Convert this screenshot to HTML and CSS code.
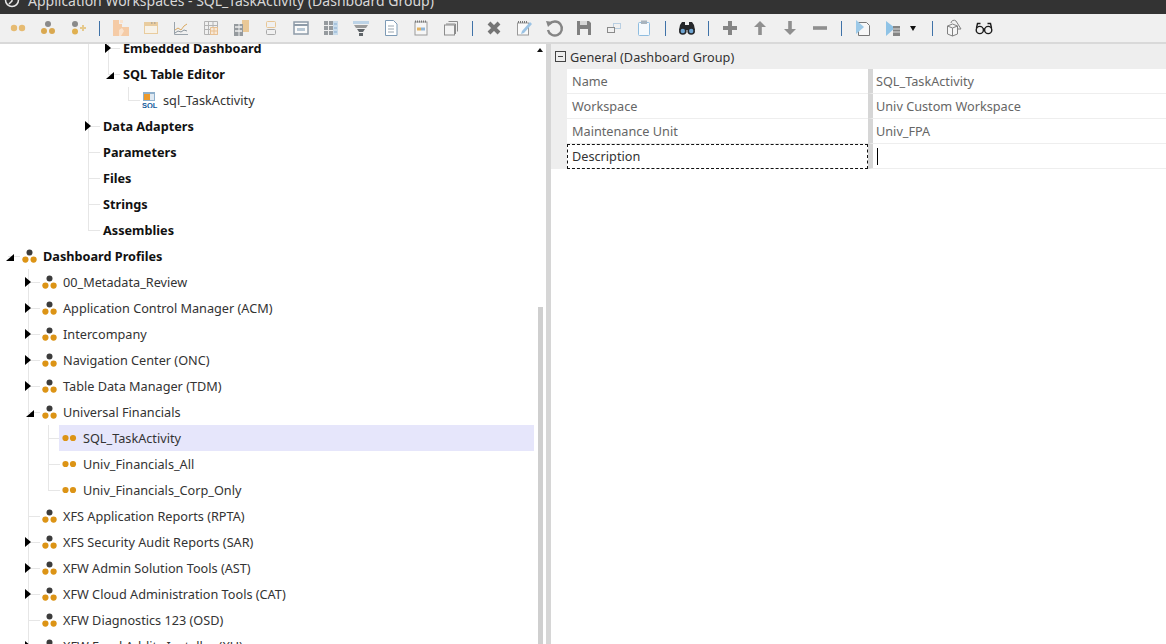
FILE: index.html
```html
<!DOCTYPE html>
<html lang="en">
<head>
    <meta charset="UTF-8">
    <meta name="viewport" content="width=device-width, initial-scale=1.0">
    <title>Application Workspaces</title>
    <link rel="stylesheet" href="styles.css">
</head>
<body>
    <svg class="sprite" aria-hidden="true">
        <symbol id="ico-profile" viewBox="0 0 15 15">
            <circle cx="7.5" cy="3.6" r="3" fill="#3c3c3c"/>
            <circle cx="3.4" cy="10.6" r="3.1" fill="#dc9416"/>
            <circle cx="11.6" cy="10.6" r="3.1" fill="#dc9416"/>
        </symbol>
        <symbol id="ico-group" viewBox="0 0 15 15">
            <circle cx="3.5" cy="7" r="3.1" fill="#dc9416"/>
            <circle cx="11" cy="7" r="3.1" fill="#dc9416"/>
        </symbol>
    </svg>

    <div class="titlebar">
        <svg class="app-logo" width="16" height="16" viewBox="0 0 16 16"><circle cx="8" cy="5" r="6.5" fill="none" stroke="#e8e8e8" stroke-width="1.5"/><path d="M8 2v4l-3 3" fill="none" stroke="#e8e8e8" stroke-width="1.5"/></svg>
        <span class="title">Application Workspaces - SQL_TaskActivity (Dashboard Group)</span>
    </div>

    <div class="toolbar">
        <span class="tool"><svg width="20" height="20" viewBox="0 0 20 20"><circle cx="6" cy="10" r="3.2" fill="#e6bb72"/><circle cx="14" cy="10" r="3.2" fill="#e6bb72"/></svg></span>
        <span class="tool"><svg width="20" height="20" viewBox="0 0 20 20"><circle cx="10" cy="6" r="3" fill="#8a8a8a"/><circle cx="6" cy="13" r="3" fill="#d9a850"/><circle cx="14" cy="13" r="3" fill="#d9a850"/></svg></span>
        <span class="tool"><svg width="20" height="20" viewBox="0 0 20 20"><circle cx="7" cy="6" r="3" fill="#8a8a8a"/><circle cx="7" cy="13.5" r="3" fill="#e0b050"/><path d="M12 10h6M15 7v6" stroke="#e6c98c" stroke-width="2"/></svg></span>
        <span class="sep"></span>
        <span class="tool"><svg width="20" height="20" viewBox="0 0 20 20"><path d="M2 2h6v4h3v3h7v9H2z" fill="#f5cba6"/><path d="M9 2h3v3H9zM8 12l3-2 2 3-3 5H8z" fill="#f9e3cf"/></svg></span>
        <span class="tool dim"><svg width="20" height="20" viewBox="0 0 20 20"><rect x="3.5" y="4.5" width="13" height="11" fill="#fbf3e6" stroke="#e7bd7c"/><path d="M4 5h12v3H4z" fill="#e7bd7c"/><path d="M10 5h1.5M13 5h1.5" stroke="#666"/></svg></span>
        <span class="tool"><svg width="20" height="20" viewBox="0 0 20 20"><path d="M3.5 4v12.5H17" fill="none" stroke="#9aa3ab"/><path d="M4 12l3-2 3 2 3-4 3-2" fill="none" stroke="#d9a860"/><path d="M4 15l3-2 3 1 3-2 3 1" fill="none" stroke="#8a949c"/></svg></span>
        <span class="tool dim"><svg width="20" height="20" viewBox="0 0 20 20"><path d="M3.5 3.5h13v13h-13zM3.5 7.5h13M3.5 11.5h13M7.5 3.5v13M12 3.5v13" fill="none" stroke="#9a9a9a"/><path d="M9.5 9.500h7v7h-7zM9.5 13h7M13 9.5v7" fill="#fbe6cd" stroke="#e5ac6b"/></svg></span>
        <span class="tool dim"><svg width="20" height="20" viewBox="0 0 20 20"><path d="M11 2h7v12h-7z" fill="#e7b872"/><path d="M3 6h9v12H3z" fill="#6f767c"/><path d="M4 9h7M4 13h7" stroke="#eee" stroke-width="1.5"/><path d="M8 6v12" stroke="#eee"/></svg></span>
        <span class="tool dim"><svg width="20" height="20" viewBox="0 0 20 20"><rect x="5.5" y="3.5" width="9" height="6" rx="1" fill="none" stroke="#e5b56f"/><rect x="5.5" y="11.5" width="9" height="5" rx="1" fill="none" stroke="#8c8c8c"/></svg></span>
        <span class="tool dim"><svg width="20" height="20" viewBox="0 0 20 20"><rect x="3" y="4" width="14" height="12" fill="#fff" stroke="#66788a" stroke-width="1.5"/><path d="M3 7h14" stroke="#66788a" stroke-width="2"/><path d="M6 10h8v3h-8z" fill="#9fb6c9"/></svg></span>
        <span class="tool dim"><svg width="20" height="20" viewBox="0 0 20 20"><path d="M3 3h9v14H3z" fill="#6f767c"/><path d="M3 7.5h9M3 12.5h9M7.5 3v14" stroke="#eee"/><path d="M12 3h5v14h-5z" fill="#b9d4ea"/><path d="M13 6h3M13 10h3M13 14h3" stroke="#5c8fc0"/></svg></span>
        <span class="tool"><svg width="20" height="20" viewBox="0 0 20 20"><path d="M2 3h16v3H2z" fill="#bdd3e6"/><path d="M3 7h14l-2 3H5z" fill="#9a9a9a"/><path d="M6 11h8l-2 3H8zM8 15h4v3H8z" fill="#5f6468"/></svg></span>
        <span class="tool"><svg width="20" height="20" viewBox="0 0 20 20"><path d="M4.5 2.5h8l3.5 3.5v11.5H4.5z" fill="#fff" stroke="#7d9ab5"/><path d="M7 8h6M7 11h6M7 14h6" stroke="#9aa6b0"/></svg></span>
        <span class="tool"><svg width="20" height="20" viewBox="0 0 20 20"><rect x="4" y="4" width="12" height="13" fill="#f6f6f6" stroke="#9a9a9a"/><path d="M4 3.5h12" stroke="#777" stroke-dasharray="1 1" stroke-width="2"/><rect x="6" y="9.5" width="4" height="3" fill="#e3b25e"/><rect x="10" y="9.5" width="4" height="3" fill="#8fb5d8"/></svg></span>
        <span class="tool"><svg width="20" height="20" viewBox="0 0 20 20"><path d="M7.5 3.5h9v10M5 6h9.5v10" fill="none" stroke="#8c8c8c"/><rect x="3.5" y="7" width="10" height="10" fill="#f3f3f3" stroke="#8c8c8c"/></svg></span>
        <span class="sep"></span>
        <span class="tool"><svg width="20" height="20" viewBox="0 0 20 20"><path d="M5 5l10 10M15 5L5 15" stroke="#757575" stroke-width="4"/></svg></span>
        <span class="tool"><svg width="20" height="20" viewBox="0 0 20 20"><rect x="3.5" y="5" width="11" height="12" fill="#fafafa" stroke="#9a9a9a"/><path d="M4 4h10" stroke="#777" stroke-dasharray="1 1" stroke-width="2"/><path d="M8 13l8-9 2 2-8 9-3 1z" fill="#9cc3e4"/></svg></span>
        <span class="tool"><svg width="20" height="20" viewBox="0 0 20 20"><path d="M5.5 6A7 7 0 1 1 4 12" fill="none" stroke="#858585" stroke-width="2.4"/><path d="M2 3l7 1-5 5z" fill="#858585"/></svg></span>
        <span class="tool"><svg width="20" height="20" viewBox="0 0 20 20"><path d="M3 3h12l2 2v12H3z" fill="#808080"/><path d="M6 3h7v4H6z" fill="#d8d8d8"/><path d="M6 11h8v6H6z" fill="#f0f0f0"/></svg></span>
        <span class="tool"><svg width="20" height="20" viewBox="0 0 20 20"><rect x="9.5" y="5.5" width="7" height="5" fill="none" stroke="#b9cfe2"/><rect x="3.5" y="9.5" width="7" height="5" fill="#f0f0f0" stroke="#8a8a8a"/></svg></span>
        <span class="tool"><svg width="20" height="20" viewBox="0 0 20 20"><rect x="4.5" y="4.5" width="11" height="13" rx="1" fill="#f5f9fc" stroke="#8fbde0"/><rect x="7" y="2.5" width="6" height="3.5" fill="#a8b4be"/></svg></span>
        <span class="sep"></span>
        <span class="tool"><svg width="20" height="20" viewBox="0 0 20 20"><path d="M3 7l2-3h3v3h4V4h3l2 3 1 5H2z" fill="#26282b"/><circle cx="5.8" cy="13" r="3.8" fill="#26282b"/><circle cx="14.2" cy="13" r="3.8" fill="#26282b"/><circle cx="5.8" cy="13" r="2.2" fill="#6fa5d2"/><circle cx="14.2" cy="13" r="2.2" fill="#6fa5d2"/></svg></span>
        <span class="sep"></span>
        <span class="tool"><svg width="20" height="20" viewBox="0 0 20 20"><path d="M10 3v14M3 10h14" stroke="#858585" stroke-width="4"/></svg></span>
        <span class="tool"><svg width="20" height="20" viewBox="0 0 20 20"><path d="M10 17V6" stroke="#8f8f8f" stroke-width="3.6"/><path d="M4 9l6-6 6 6z" fill="#8f8f8f"/></svg></span>
        <span class="tool"><svg width="20" height="20" viewBox="0 0 20 20"><path d="M10 3v11" stroke="#8f8f8f" stroke-width="3.6"/><path d="M4 11l6 6 6-6z" fill="#8f8f8f"/></svg></span>
        <span class="tool"><svg width="20" height="20" viewBox="0 0 20 20"><path d="M3 10h14" stroke="#8f8f8f" stroke-width="3.6"/></svg></span>
        <span class="sep"></span>
        <span class="tool"><svg width="20" height="20" viewBox="0 0 20 20"><path d="M5.5 4.5h8l3 3v10h-11z" fill="#f7f7f7" stroke="#777"/><path d="M3 2l8 7-8 7z" fill="#9cc9e8"/></svg></span>
        <span class="tool"><svg width="20" height="20" viewBox="0 0 20 20"><path d="M3 3l9 7-9 8z" fill="#8fc3e6"/><path d="M10 8h7v10h-7z" fill="#858585"/><path d="M10 11h7M10 14h7" stroke="#ddd"/></svg></span>
        <span class="drop"></span>
        <span class="sep"></span>
        <span class="tool"><svg width="20" height="20" viewBox="0 0 20 20"><path d="M3.5 8l5-2 5 2v8l-5 2-5-2zM3.500 8l5 2 5-2M8.5 10v8" fill="#f5f5f5" stroke="#808080"/><path d="M7 5a3 3 0 0 1 5-2l5 8h-4" fill="none" stroke="#808080"/></svg></span>
        <span class="tool"><svg width="20" height="20" viewBox="0 0 20 20"><circle cx="5.8" cy="12" r="3.6" fill="none" stroke="#1c1c1c" stroke-width="1.4"/><circle cx="14.2" cy="12" r="3.6" fill="none" stroke="#1c1c1c" stroke-width="1.4"/><path d="M2.500 10l1-4.500h3M17.500 10l-1-4.500h-3M9 11h2" fill="none" stroke="#1c1c1c" stroke-width="1.4"/></svg></span>
    </div>

    <div class="workspace">
        <div class="tree-panel">
            <div class="tree">
                <div class="row"><span class="c"></span><span class="c"></span><span class="c"></span><span class="c"></span><span class="c v"></span><span class="c t"><i class="arrow"></i></span><span class="node head">Embedded Dashboard</span></div>
                <div class="row"><span class="c"></span><span class="c"></span><span class="c"></span><span class="c"></span><span class="c v"></span><span class="c l"><i class="arrow open"></i></span><span class="node head">SQL Table Editor</span></div>
                <div class="row"><span class="c"></span><span class="c"></span><span class="c"></span><span class="c"></span><span class="c v"></span><span class="c"></span><span class="c l"></span><span class="node">
                    <svg class="sql-icon" width="16" height="16" viewBox="0 0 16 16"><rect x="1" y="0" width="12" height="9" fill="#8fb0cc"/><rect x="2" y="2" width="6" height="6" fill="#ec9a2c"/><rect x="8" y="2" width="4" height="6" fill="#dfe9f2"/><text x="0" y="15.5" class="sql-text">SQL</text></svg>
                    sql_TaskActivity</span></div>
                <div class="row"><span class="c"></span><span class="c"></span><span class="c"></span><span class="c"></span><span class="c t"><i class="arrow"></i></span><span class="node head">Data Adapters</span></div>
                <div class="row"><span class="c"></span><span class="c"></span><span class="c"></span><span class="c"></span><span class="c t"></span><span class="node head">Parameters</span></div>
                <div class="row"><span class="c"></span><span class="c"></span><span class="c"></span><span class="c"></span><span class="c t"></span><span class="node head">Files</span></div>
                <div class="row"><span class="c"></span><span class="c"></span><span class="c"></span><span class="c"></span><span class="c t"></span><span class="node head">Strings</span></div>
                <div class="row"><span class="c"></span><span class="c"></span><span class="c"></span><span class="c"></span><span class="c l"></span><span class="node head">Assemblies</span></div>

                <div class="row"><span class="c h"><i class="arrow open"></i></span><span class="node strong"><svg class="icon"><use href="#ico-profile"/></svg>Dashboard Profiles</span></div>

                <div class="row"><span class="c"></span><span class="c t"><i class="arrow"></i></span><span class="node"><svg class="icon"><use href="#ico-profile"/></svg>00_Metadata_Review</span></div>
                <div class="row"><span class="c"></span><span class="c t"><i class="arrow"></i></span><span class="node"><svg class="icon"><use href="#ico-profile"/></svg>Application Control Manager (ACM)</span></div>
                <div class="row"><span class="c"></span><span class="c t"><i class="arrow"></i></span><span class="node"><svg class="icon"><use href="#ico-profile"/></svg>Intercompany</span></div>
                <div class="row"><span class="c"></span><span class="c t"><i class="arrow"></i></span><span class="node"><svg class="icon"><use href="#ico-profile"/></svg>Navigation Center (ONC)</span></div>
                <div class="row"><span class="c"></span><span class="c t"><i class="arrow"></i></span><span class="node"><svg class="icon"><use href="#ico-profile"/></svg>Table Data Manager (TDM)</span></div>
                <div class="row"><span class="c"></span><span class="c t"><i class="arrow open"></i></span><span class="node"><svg class="icon"><use href="#ico-profile"/></svg>Universal Financials</span></div>
                <div class="row"><span class="c"></span><span class="c v"></span><span class="c t"></span><span class="node selected"><svg class="icon"><use href="#ico-group"/></svg>SQL_TaskActivity</span></div>
                <div class="row"><span class="c"></span><span class="c v"></span><span class="c t"></span><span class="node"><svg class="icon"><use href="#ico-group"/></svg>Univ_Financials_All</span></div>
                <div class="row"><span class="c"></span><span class="c v"></span><span class="c l"></span><span class="node"><svg class="icon"><use href="#ico-group"/></svg>Univ_Financials_Corp_Only</span></div>
                <div class="row"><span class="c"></span><span class="c t"></span><span class="node"><svg class="icon"><use href="#ico-profile"/></svg>XFS Application Reports (RPTA)</span></div>
                <div class="row"><span class="c"></span><span class="c t"><i class="arrow"></i></span><span class="node"><svg class="icon"><use href="#ico-profile"/></svg>XFS Security Audit Reports (SAR)</span></div>
                <div class="row"><span class="c"></span><span class="c t"><i class="arrow"></i></span><span class="node"><svg class="icon"><use href="#ico-profile"/></svg>XFW Admin Solution Tools (AST)</span></div>
                <div class="row"><span class="c"></span><span class="c t"><i class="arrow"></i></span><span class="node"><svg class="icon"><use href="#ico-profile"/></svg>XFW Cloud Administration Tools (CAT)</span></div>
                <div class="row"><span class="c"></span><span class="c t"></span><span class="node"><svg class="icon"><use href="#ico-profile"/></svg>XFW Diagnostics 123 (OSD)</span></div>
                <div class="row"><span class="c"></span><span class="c t"><i class="arrow"></i></span><span class="node"><svg class="icon"><use href="#ico-profile"/></svg>XFW Fund Addits Installer (XU)</span></div>
            </div>
            <div class="scrollbar">
                <span class="scroll-up"></span>
                <span class="scroll-thumb"></span>
            </div>
        </div>

        <div class="splitter"></div>

        <div class="props">
            <div class="group-head">
                <span class="collapse"></span>
                <span>General (Dashboard Group)</span>
            </div>
            <div class="prop"><span class="prop-name">Name</span><span class="prop-value">SQL_TaskActivity</span></div>
            <div class="prop"><span class="prop-name">Workspace</span><span class="prop-value">Univ Custom Workspace</span></div>
            <div class="prop"><span class="prop-name">Maintenance Unit</span><span class="prop-value">Univ_FPA</span></div>
            <div class="prop active"><span class="prop-name">Description</span><span class="prop-value"><i class="caret"></i></span></div>
        </div>
    </div>
</body>
</html>
```

FILE: styles.css
```css
html, body {
    margin: 0;
    height: 100%;
    overflow: hidden;
}

body {
    display: flex;
    flex-direction: column;
    font-family: "Noto Sans", "Open Sans", sans-serif;
    font-size: 12.7px;
    color: #333;
    background: white;
}

.sprite {
    display: none;
}

/* title bar, cut off at the top of the shot */
.titlebar {
    height: 14px;
    box-sizing: border-box;
    flex: none;
    display: flex;
    align-items: flex-end;
    gap: 8px;
    padding: 0 0 3px 4px;
    overflow: hidden;
    background: #333;
    color: #d8d8d8;
    font-size: 14px;
}

.title {
    line-height: 20px;
    white-space: nowrap;
}

.app-logo {
    flex: none;
}

/* toolbar */
.toolbar {
    height: 28px;
    flex: none;
    display: flex;
    align-items: center;
    padding-left: 3px;
    background: #f0f0f0;
    border-bottom: 2px solid #d9d9d9;
}

.tool {
    width: 30px;
    display: flex;
    justify-content: center;
}

.dim svg {
    opacity: 0.7;
}

.sep {
    width: 1px;
    height: 15px;
    margin: 0 6px;
    background: #3f72a8;
}

.drop {
    width: 0;
    height: 0;
    margin: 0 10px 0 2px;
    border-left: 3.5px solid transparent;
    border-right: 3.5px solid transparent;
    border-top: 5px solid #111;
}

/* tree */
.workspace {
    flex: 1;
    display: flex;
    min-height: 0;
}

.tree-panel {
    width: 546px;
    flex: none;
    display: flex;
    overflow: hidden;
}

.tree {
    flex: 1;
    margin-top: -9px;
}

.row {
    display: flex;
    height: 26px;
}

.c {
    width: 20px;
    flex: none;
    display: flex;
    align-items: center;
    background-repeat: no-repeat;
}

.v {
    background-image: linear-gradient(#e6e6e6, #e6e6e6);
    background-position: 8px 0;
    background-size: 1px 100%;
}

.t {
    background-image: linear-gradient(#e6e6e6, #e6e6e6), linear-gradient(#e6e6e6, #e6e6e6);
    background-position: 8px 0, 8px 13px;
    background-size: 1px 100%, 12px 1px;
}

.l {
    background-image: linear-gradient(#e6e6e6, #e6e6e6), linear-gradient(#e6e6e6, #e6e6e6);
    background-position: 8px 0, 8px 13px;
    background-size: 1px 14px, 12px 1px;
}

.h {
    background-image: linear-gradient(#e6e6e6, #e6e6e6);
    background-position: 8px 13px;
    background-size: 12px 1px;
}

.arrow {
    width: 0;
    height: 0;
    margin-left: 5px;
    border-left: 6px solid #000;
    border-top: 5px solid transparent;
    border-bottom: 5px solid transparent;
}

.arrow.open {
    margin: 3px 0 0 6px;
    border-top: 0;
    border-left: 8px solid transparent;
    border-bottom: 7px solid #000;
}

.node {
    flex: 1;
    display: flex;
    align-items: center;
    gap: 6px;
    padding-left: 2px;
    white-space: nowrap;
}

.head {
    padding-left: 3px;
    font-weight: bold;
    color: #111;
}

.strong {
    font-weight: bold;
    color: #111;
}

.selected {
    margin-left: -1px;
    padding-left: 3px;
    background: #e6e6fb;
}

.icon {
    width: 15px;
    height: 15px;
    flex: none;
}

.sql-icon {
    flex: none;
    margin-right: -1px;
}

.sql-text {
    font-family: "Liberation Sans", sans-serif;
    font-size: 7.5px;
    font-weight: bold;
    fill: #0f5a9c;
}

/* thin scrollbar at the right of the tree */
.scrollbar {
    width: 12px;
    flex: none;
    display: flex;
    flex-direction: column;
    align-items: center;
}

.scroll-up {
    width: 0;
    height: 0;
    margin-top: 4px;
    border-left: 3px solid transparent;
    border-right: 3px solid transparent;
    border-bottom: 4px solid #111;
}

.scroll-thumb {
    width: 5px;
    flex: 1;
    margin-top: 255px;
    background: #cfcfcf;
}

.splitter {
    width: 5px;
    flex: none;
    background: #d6d6d6;
}

/* property grid */
.props {
    flex: 1;
    min-width: 0;
}

.group-head {
    height: 25px;
    display: flex;
    align-items: center;
    gap: 4px;
    padding-left: 4px;
    background: #eee;
}

.collapse {
    width: 9px;
    height: 9px;
    flex: none;
    border: 1px solid #444;
    background: linear-gradient(#444, #444) center / 5px 1px no-repeat;
}

.prop {
    height: 25px;
    box-sizing: border-box;
    display: flex;
    border-left: 16px solid #eee;
    background: white;
}

.prop-name {
    width: 301px;
    flex: none;
    box-sizing: border-box;
    padding-left: 5px;
    line-height: 25px;
    color: #666;
    border-bottom: 1px solid #eee;
}

.prop-value {
    flex: 1;
    display: flex;
    align-items: center;
    padding-left: 3px;
    color: #666;
    border-left: 5px solid #d6d6d6;
    border-bottom: 1px solid #eee;
}

.active .prop-name {
    color: #333;
    border: 1px dashed #111;
    padding-left: 4px;
    line-height: 23px;
}

.caret {
    width: 1px;
    height: 17px;
    margin-left: 1px;
    background: #000;
}
```
